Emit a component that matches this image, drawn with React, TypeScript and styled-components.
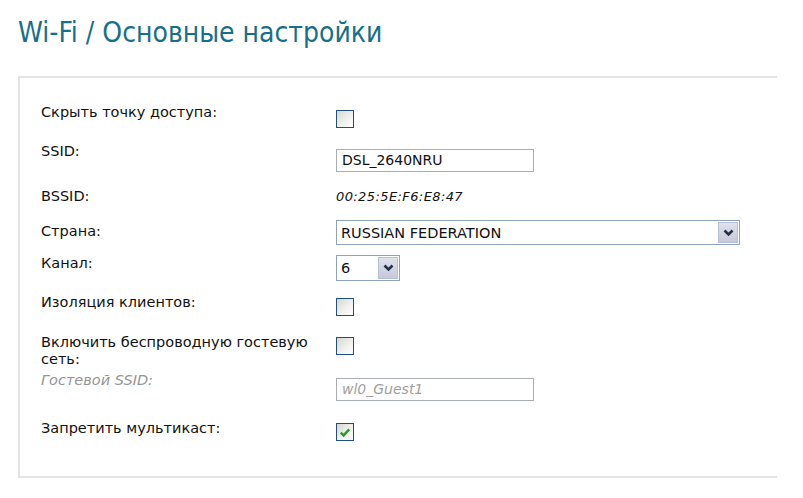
import React from "react";
import styled, { createGlobalStyle } from "styled-components";

const Global = createGlobalStyle`
  html, body { margin: 0; padding: 0; background: #ffffff; }
  body { font-family: "DejaVu Sans", sans-serif; }
`;

const Page = styled.div`
  width: 803px;
  height: 498px;
  box-sizing: border-box;
  padding: 16px 0 0 18px;
  overflow: hidden;
`;

const Title = styled.h1`
  margin: 0 0 26px 0;
  font-family: "DejaVu Sans Condensed", "DejaVu Sans", sans-serif;
  font-stretch: condensed;
  font-weight: normal;
  font-size: 28px;
  line-height: 34px;
  color: #17708a;
`;

const Panel = styled.section`
  width: 759px;
  height: 402px;
  box-sizing: border-box;
  border: 2px solid #e4e4e4;
  border-right: none;
  padding: 26px 0 0 21px;
`;

const Row = styled.div<{ $h: number }>`
  display: grid;
  grid-template-columns: 295px 1fr;
  align-items: start;
  height: ${(p) => p.$h}px;
`;

const Label = styled.div<{ $muted?: boolean }>`
  font-family: "DejaVu Sans", sans-serif;
  font-size: 14.5px;
  line-height: 17px;
  color: ${(p) => (p.$muted ? "#959595" : "#111111")};
  font-style: ${(p) => (p.$muted ? "italic" : "normal")};
  width: 275px;
`;

const Control = styled.div<{ $dy?: number }>`
  margin-top: ${(p) => p.$dy ?? 3}px;
  display: flex;
  align-items: center;
`;

const Box = styled.span<{ $checked?: boolean }>`
  width: 18px;
  height: 18px;
  box-sizing: border-box;
  border: 1px solid #1f4f7e;
  background: linear-gradient(135deg, #d8d8d2 0%, #f2f2ee 60%, #ffffff 100%);
  display: flex;
  align-items: center;
  justify-content: center;
`;

const TextField = styled.div<{ $disabled?: boolean }>`
  width: 198px;
  height: 23px;
  box-sizing: border-box;
  border: 1px solid #a9aeb3;
  padding: 0 5px;
  font-size: 14px;
  line-height: 21px;
  color: ${(p) => (p.$disabled ? "#a0a0a0" : "#111111")};
  font-style: ${(p) => (p.$disabled ? "italic" : "normal")};
  background: #ffffff;
`;

const Value = styled.div`
  font-size: 13px;
  line-height: 17px;
  font-style: italic;
  color: #111111;
  letter-spacing: 0.4px;
`;

const Select = styled.div<{ $w: number; $h: number }>`
  width: ${(p) => p.$w}px;
  height: ${(p) => p.$h}px;
  box-sizing: border-box;
  border: 1px solid #8da2bd;
  display: flex;
  align-items: stretch;
  background: #ffffff;
`;

const SelectText = styled.div`
  flex: 1;
  padding-left: 4px;
  font-size: 14.5px;
  display: flex;
  align-items: center;
  color: #111111;
`;

const DropButton = styled.div`
  width: 20px;
  margin: 1px;
  box-sizing: border-box;
  border: 1px solid #b7bfd6;
  background: linear-gradient(180deg, #dfe1ec 0%, #c6c9da 100%);
  display: flex;
  align-items: center;
  justify-content: center;
`;

const Chevron = () => (
  <svg width="11" height="8" viewBox="0 0 11 8">
    <path d="M1.5 1.5 L5.5 5.5 L9.5 1.5" fill="none" stroke="#27304a" strokeWidth="2.6" />
  </svg>
);

const Check = () => (
  <svg width="12" height="11" viewBox="0 0 12 11">
    <path d="M1.8 5.6 L4.6 8.4 L10.2 2.4" fill="none" stroke="#22a022" strokeWidth="2.4" />
  </svg>
);

const Checkbox = ({ checked }: { checked?: boolean }) => (
  <Box $checked={checked}>{checked ? <Check /> : null}</Box>
);

export default function App() {
  return (
    <Page>
      <Global />
      <Title>Wi-Fi / Основные настройки</Title>
      <Panel>
        <Row $h={39}>
          <Label>Скрыть точку доступа:</Label>
          <Control $dy={6}>
            <Checkbox />
          </Control>
        </Row>
        <Row $h={45}>
          <Label>SSID:</Label>
          <Control $dy={6}>
            <TextField>DSL_2640NRU</TextField>
          </Control>
        </Row>
        <Row $h={35}>
          <Label>BSSID:</Label>
          <Control $dy={0}>
            <Value>00:25:5E:F6:E8:47</Value>
          </Control>
        </Row>
        <Row $h={32}>
          <Label>Страна:</Label>
          <Control $dy={-3}>
            <Select $w={404} $h={25}>
              <SelectText>RUSSIAN FEDERATION</SelectText>
              <DropButton>
                <Chevron />
              </DropButton>
            </Select>
          </Control>
        </Row>
        <Row $h={39}>
          <Label>Канал:</Label>
          <Control $dy={0}>
            <Select $w={64} $h={26}>
              <SelectText>6</SelectText>
              <DropButton>
                <Chevron />
              </DropButton>
            </Select>
          </Control>
        </Row>
        <Row $h={40}>
          <Label>Изоляция клиентов:</Label>
          <Control $dy={4}>
            <Checkbox />
          </Control>
        </Row>
        <Row $h={38}>
          <Label>Включить беспроводную гостевую сеть:</Label>
          <Control $dy={3}>
            <Checkbox />
          </Control>
        </Row>
        <Row $h={48}>
          <Label $muted>Гостевой SSID:</Label>
          <Control $dy={6}>
            <TextField $disabled>wl0_Guest1</TextField>
          </Control>
        </Row>
        <Row $h={50}>
          <Label>Запретить мультикаст:</Label>
          <Control $dy={3}>
            <Checkbox checked />
          </Control>
        </Row>
      </Panel>
    </Page>
  );
}
